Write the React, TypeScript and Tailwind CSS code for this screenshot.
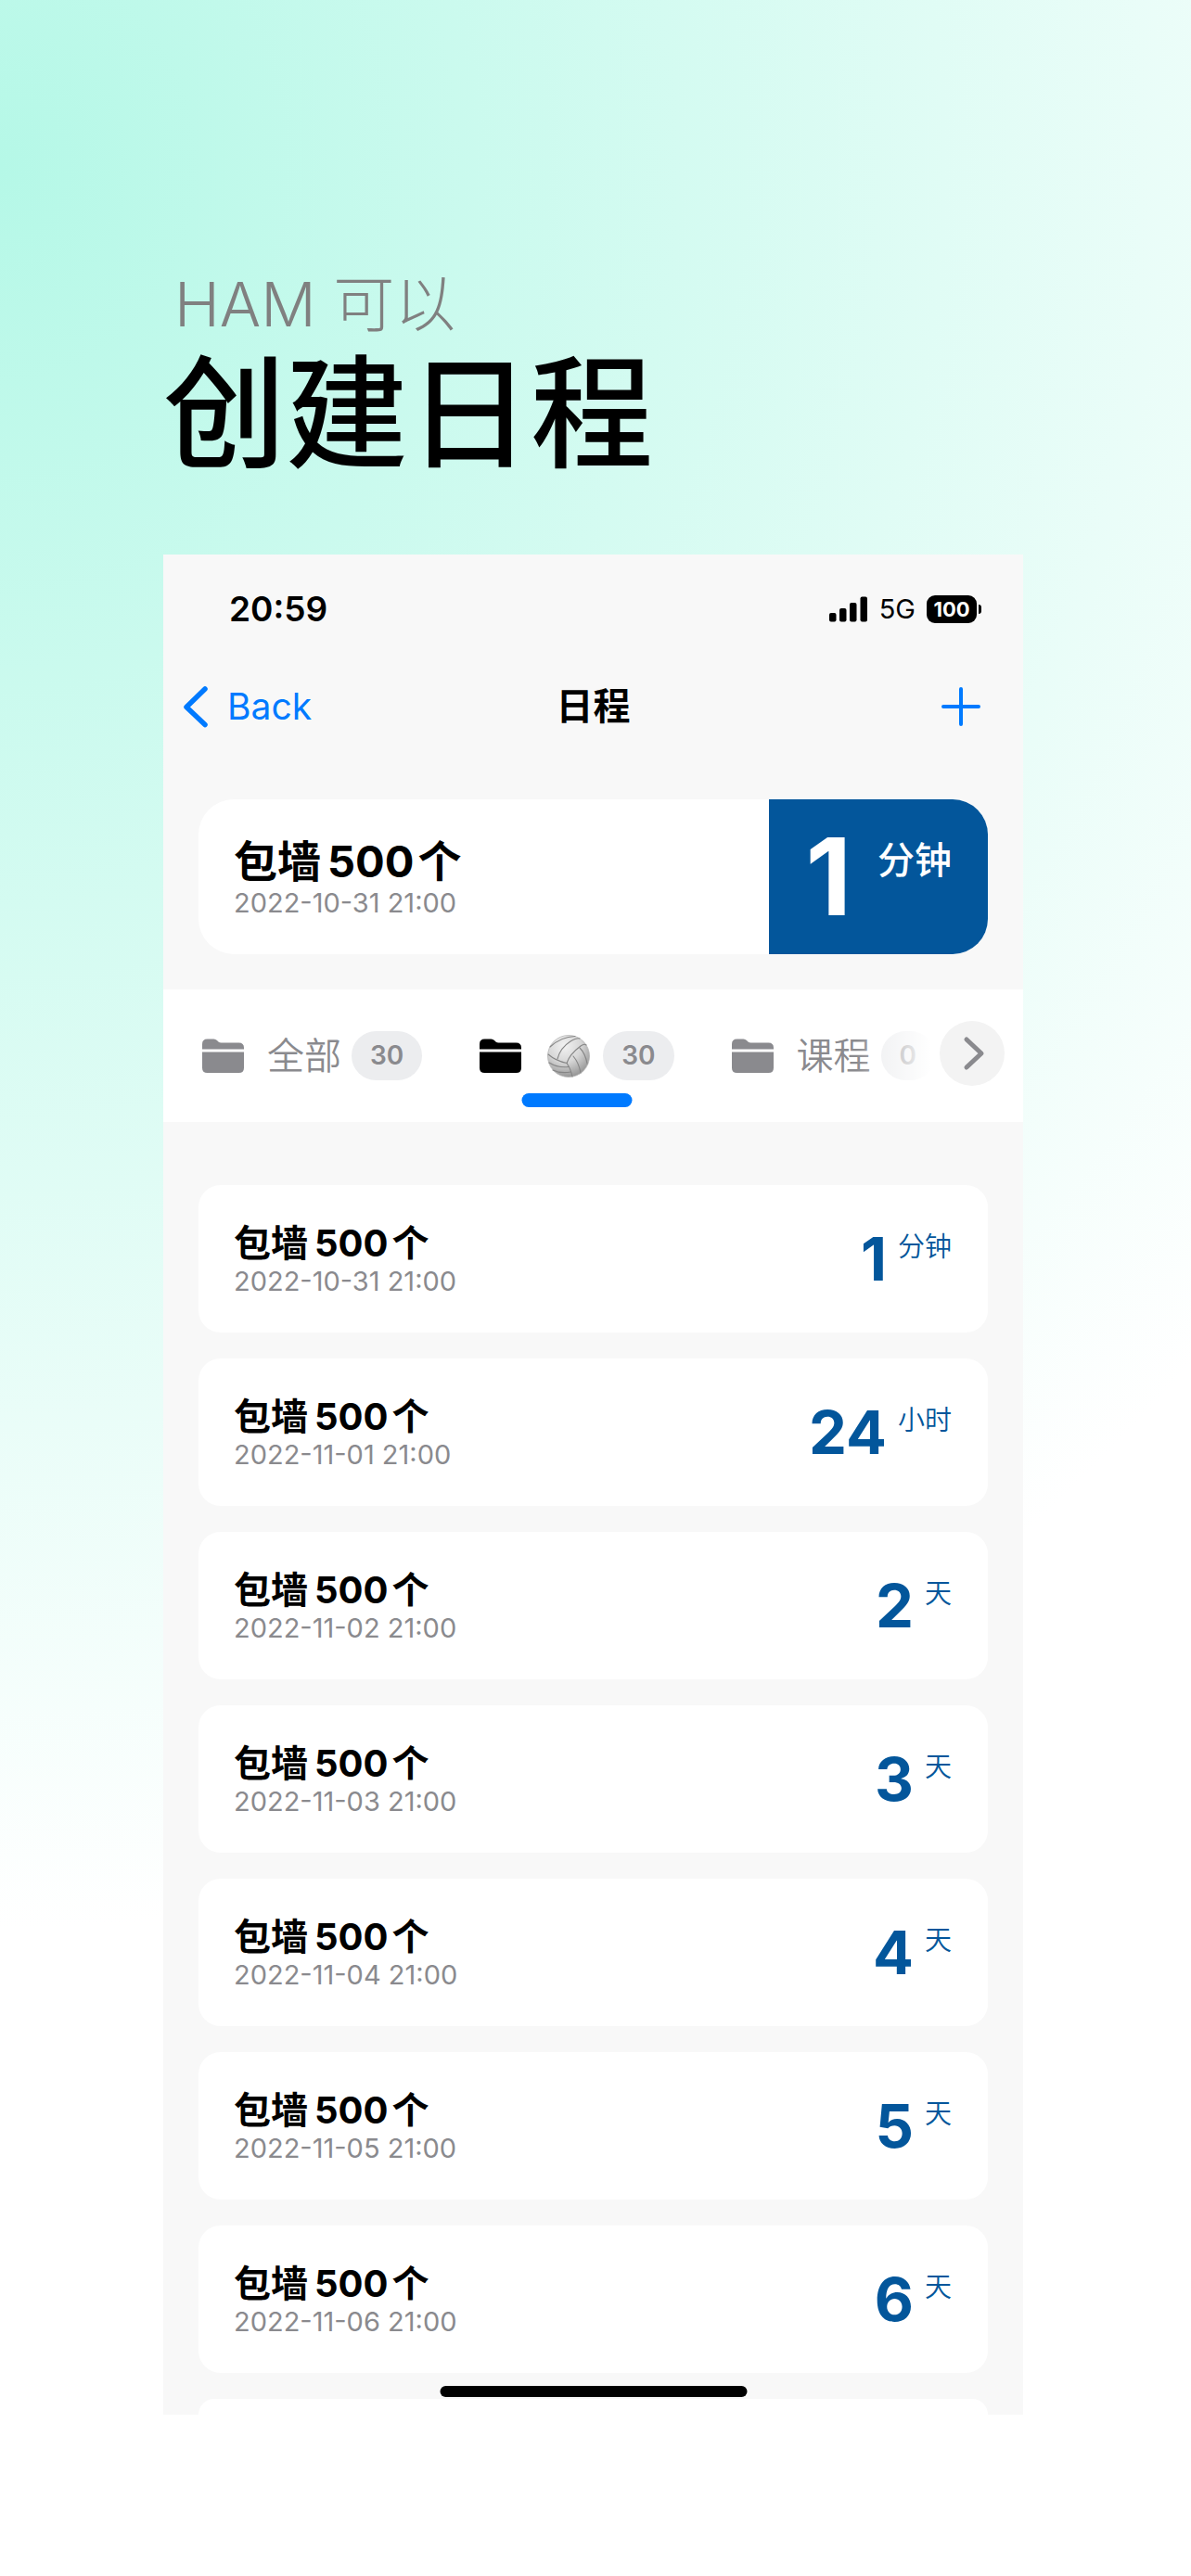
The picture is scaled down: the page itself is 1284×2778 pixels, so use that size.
import React from "react";

type Tab = { name: string; count: number; ball?: boolean };
type Schedule = { date: string; value: string; unit: string };

const tabs: Tab[] = [
  { name: "全部", count: 30 },
  { name: "排球", count: 30, ball: true },
  { name: "课程", count: 0 },
];

const schedules: Schedule[] = [
  { date: "2022-10-31 21:00", value: "1", unit: "分钟" },
  { date: "2022-11-01 21:00", value: "24", unit: "小时" },
  { date: "2022-11-02 21:00", value: "2", unit: "天" },
  { date: "2022-11-03 21:00", value: "3", unit: "天" },
  { date: "2022-11-04 21:00", value: "4", unit: "天" },
  { date: "2022-11-05 21:00", value: "5", unit: "天" },
  { date: "2022-11-06 21:00", value: "6", unit: "天" },
];

function FolderIcon() {
  return (
    <svg viewBox="0 0 46 38" className="h-[38px] w-[46px] shrink-0" fill="currentColor" aria-hidden="true">
      <path d="M0 11.5V6Q0 .5 5.500 .5H12.500Q14.500 .5 16 2L17.500 3.500Q18.800 4.500 20.500 4.500H39.500Q45 4.500 45 10V11.500Z" />
      <path d="M0 14.500H45V31.500Q45 37 39.500 37H5.500Q0 37 0 31.500Z" />
    </svg>
  );
}

function Volleyball() {
  return (
    <svg viewBox="0 0 46 46" className="h-[46px] w-[52px]" role="img" aria-label="排球">
      <defs>
        <radialGradient id="ball" cx="0.4" cy="0.25" r="0.8">
          <stop offset="0" stopColor="#f2f2f2" />
          <stop offset="0.5" stopColor="#d6d6d6" />
          <stop offset="1" stopColor="#8f8f8f" />
        </radialGradient>
      </defs>
      <circle cx="23" cy="23" r="22.500" fill="url(#ball)" stroke="#b5b5b5" strokeWidth="0.800" />
      <g fill="none" stroke="#858585" strokeWidth="1.100" strokeLinecap="round">
        <path d="M1 21Q9 28 21 30.500Q24 21 36 12Q40 9 42 11" />
        <path d="M21 30.500Q25 36 27 45" />
        <path d="M3 13Q15 2 30 1.500" />
        <path d="M11 26Q14 14 25 7Q32 3 35 4" />
        <path d="M28 23Q34 30 36 41" />
        <path d="M35 14Q41 20 43 31" />
        <path d="M2 30Q12 36 23 34.500" />
        <path d="M6 38Q14 42 25.500 40" />
      </g>
    </svg>
  );
}

function SignalIcon() {
  return (
    <svg viewBox="0 0 42 28" className="h-7 w-[42px]" fill="currentColor" aria-hidden="true">
      <rect x="0" y="18" width="7.500" height="9.500" rx="2" />
      <rect x="11" y="13" width="7.500" height="14.500" rx="2" />
      <rect x="22" y="7" width="7.500" height="20.500" rx="2" />
      <rect x="33.500" y="0.500" width="7.500" height="27" rx="2" />
    </svg>
  );
}

function Title() {
  return (
    <>
      包墙<span className="mr-1 ml-[7px] font-bold">500</span>个
    </>
  );
}

function ScheduleCard({ date, value, unit }: Schedule) {
  return (
    <li className="flex items-start justify-between rounded-3xl bg-white pt-[41px] pr-[39px] pb-9 pl-[38px]">
      <div>
        <h3 className="text-[40px] leading-[44px] font-semibold">
          <Title />
        </h3>
        <p className="text-[29px] leading-[38px] text-[#8a8a8e]">{date}</p>
      </div>
      <div className="flex items-start gap-3 text-[#03569b]">
        <strong className="text-[65px] leading-[78px] font-bold">{value}</strong>
        <span className="text-[29px] leading-[52px] font-[350]">{unit}</span>
      </div>
    </li>
  );
}

export default function App() {
  return (
    <main
      lang="zh-CN"
      className="min-h-screen bg-white bg-[radial-gradient(1750px_1900px_at_0_180px,#b5f8e7,#ffffff)] pt-[288px] pr-[181px] pb-[174px] pl-44 font-['Inter','Noto_Sans_CJK_SC',sans-serif] text-black"
    >
      <header className="h-[310px]">
        <p className="pl-3 text-[66px] leading-[80px] font-light text-[#808080]">HAM 可以</p>
        <h1 className="text-[132px] leading-[156px] font-medium">创建日程</h1>
      </header>

      <section className="relative overflow-hidden bg-[#f8f8f8]">
        <div className="flex h-[118px] items-center justify-between pr-[45px] pl-[71px]">
          <time className="text-[37px] font-semibold">20:59</time>
          <div className="flex items-center">
            <SignalIcon />
            <span className="ml-3 text-[29px]">5G</span>
            <span className="ml-3 flex h-[30px] w-[54px] items-center justify-center rounded-[9px] bg-black text-[22px] font-bold text-white">
              100
            </span>
            <span className="ml-0.5 h-2.5 w-[3px] rounded-r-full bg-black" />
          </div>
        </div>

        <nav className="grid h-[92px] grid-cols-3 items-center pr-[45px] pl-[21px]">
          <button className="flex items-center gap-5 text-[39px] text-[#007aff]">
            <svg viewBox="0 0 28 46" className="h-[46px] w-7" fill="none" stroke="currentColor" strokeWidth="5.500" strokeLinecap="round" strokeLinejoin="round" aria-hidden="true">
              <path d="M24 4L4 23.500L24 42.500" />
            </svg>
            Back
          </button>
          <h2 className="pl-6 text-center text-[40px] font-semibold">日程</h2>
          <button aria-label="添加" className="justify-self-end text-[#007aff]">
            <svg viewBox="0 0 44 44" className="h-11 w-11" fill="none" stroke="currentColor" strokeWidth="4" strokeLinecap="round" aria-hidden="true">
              <path d="M22 3V41M3 22H41" />
            </svg>
          </button>
        </nav>

        <article className="mx-[38px] mt-[54px] mb-[38px] flex overflow-hidden rounded-[38px] bg-white">
          <div className="grow pt-[41px] pb-9 pl-[38px]">
            <h2 className="text-[47px] leading-[52px] font-semibold">
              <Title />
            </h2>
            <p className="text-[29px] leading-[38px] text-[#8a8a8e]">2022-10-31 21:00</p>
          </div>
          <div className="flex w-[236px] items-start justify-end gap-7 bg-[#03569b] pt-10 pr-[39px] text-white">
            <strong className="text-[115px] leading-[88px] font-bold">1</strong>
            <span className="text-[40px] leading-[52px] font-medium">分钟</span>
          </div>
        </article>

        <div className="relative overflow-hidden bg-white">
          <div className="flex h-[143px] items-stretch gap-[62px] pl-[42px]">
            {tabs.map((tab) => (
              <button
                key={tab.name}
                className={
                  tab.ball
                    ? "relative flex shrink-0 items-center text-black"
                    : "relative flex shrink-0 items-center text-[#8a8a8e]"
                }
              >
                <FolderIcon />
                <span className="ml-6 text-[40px] font-[350]">{tab.ball ? <Volleyball /> : tab.name}</span>
                <span className="ml-[11px] rounded-full bg-[#ecedef] px-5 text-[28px] leading-[53px] font-semibold text-[#8a8a8e]">
                  {tab.count}
                </span>
                {tab.ball && (
                  <span className="absolute bottom-4 left-1/2 h-[15px] w-[119px] -translate-x-1/2 rounded-full bg-[#007aff]" />
                )}
              </button>
            ))}
          </div>
          <div className="absolute inset-y-0 right-0 w-[180px] bg-linear-to-r from-white/0 to-white to-45%" />
          <button
            aria-label="更多"
            className="absolute top-[34px] right-5 flex size-[70px] items-center justify-center rounded-full bg-[#f3f3f3] pl-1 text-[#8a8a8e]"
          >
            <svg viewBox="0 0 24 38" className="h-[38px] w-6" fill="none" stroke="currentColor" strokeWidth="5" strokeLinecap="round" strokeLinejoin="round" aria-hidden="true">
              <path d="M4 4L20 19L4 34" />
            </svg>
          </button>
        </div>

        <ul className="mx-[38px] flex flex-col gap-7 pt-[68px]">
          {schedules.map((item) => (
            <ScheduleCard key={item.date} {...item} />
          ))}
          <li aria-hidden="true" className="h-[17px] rounded-t-3xl bg-white" />
        </ul>

        <div className="absolute bottom-[19px] left-1/2 h-3 w-[331px] -translate-x-1/2 rounded-full bg-black" />
      </section>
    </main>
  );
}
